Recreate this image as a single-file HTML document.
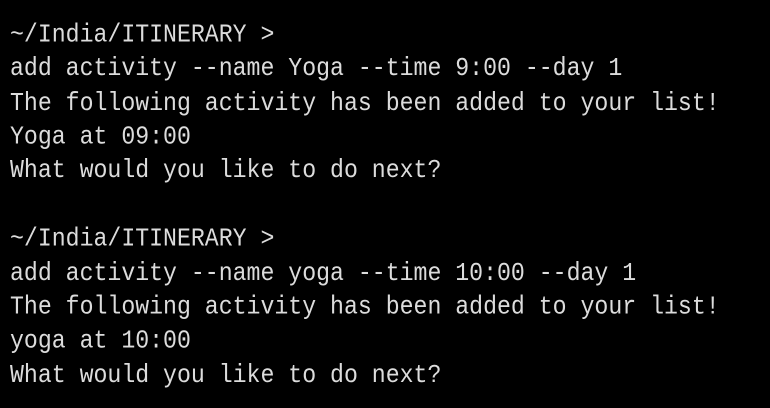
<!DOCTYPE html>
<html><head><style>
html,body{margin:0;padding:0;background:#000;width:770px;height:408px;overflow:hidden}
pre{margin:0;position:absolute;left:10px;top:18px;font-family:"Liberation Mono",monospace;font-size:23.2px;line-height:30.36px;color:#dcdcdc;transform:scaleY(1.12);transform-origin:0 0}
</style></head><body>
<pre>~/India/ITINERARY &gt;
add activity --name Yoga --time 9:00 --day 1
The following activity has been added to your list!
Yoga at 09:00
What would you like to do next?

~/India/ITINERARY &gt;
add activity --name yoga --time 10:00 --day 1
The following activity has been added to your list!
yoga at 10:00
What would you like to do next?</pre>
</body></html>
